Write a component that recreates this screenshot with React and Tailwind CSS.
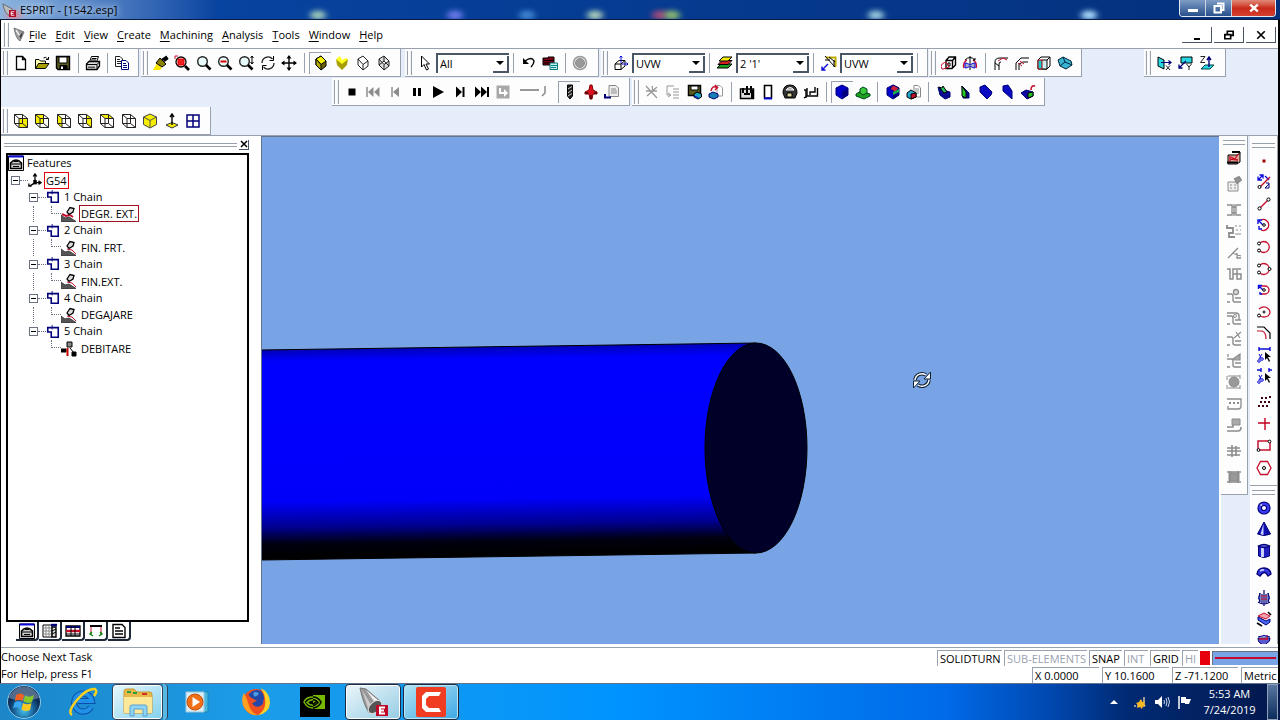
import { Fragment } from "react";

// circle written as path data, so every icon is a plain list of paths
const c = (x, y, r) => `M${x - r} ${y}a${r} ${r} 0 1 0 ${2 * r} 0a${r} ${r} 0 1 0 ${-2 * r} 0`;

const K = "#000";
const G = "#8c8c8c";
const N = "#00007a";
const B = "#0a0ad8";
const R = "#c8102e";
const Y = "#f5ee00";
const W = "#fff";

const wire = [
  "M1.5 1.5H9.5V10.5H1.5ZM6 5.5H14.5V14.5H6ZM1.5 1.5L6 5.5M9.5 1.5L14.5 5.5M9.5 10.5L14.5 14.5M1.5 10.5L6 14.5",
  "#222",
];
const lens = [
  [c(6.5, 6.5, 4.8), "#222", "#e8fbfb", 1.4],
  ["M10 10L14.5 14.5", K, "none", 2.6],
];
const blueCube = [
  ["M8 1L14 4V11L8 15L2 11V4Z", N, "#0000c8"],
  ["M8 7.5L14 4V11L8 15Z", "none", "#000080"],
];
const turning = ["M0 9L4 12L8 11L15 15.5H0Z", "#444", "#555"];
const insert = ["M6 6L9 1.5L13 2.5L12 6L8 8.5Z", K, "#ddd", 1.3];
const bed = ["M1 6H5Q7 6 7 8V12Q7 14 9 14H15M1 14H4M9 10H15", G, "none", 1.4];

// [path, stroke, fill, stroke width] in a 16 x 16 box
const ICONS = {
  newFile: [["M3.5 1.5H9.5L12.5 4.5V14.5H3.5ZM9.5 1.5V4.5H12.5", K, W, 1.3]],
  open: [
    ["M1.5 13.5V4.5H5L6.5 6H11.5V8", K, "#ffffb0"],
    ["M1.5 13.5L4.5 8.5H15L11.5 13.5Z", K, "#a8a000"],
    ["M9.5 3Q12 1 13.5 4M14.5 2V4.5H12", K],
  ],
  save: [
    ["M1.5 1.5H14.5V14.5H3L1.5 13Z", K, "#5c5c20", 1.4],
    ["M4 2H12V8H4Z", K, W],
    ["M5 10.5H12V14.5H5Z", K, K],
    ["M6 11.5H8V14H6Z", "none", W],
  ],
  print: [
    ["M4.5 7L6.5 1.5H13.5L11.5 7", K, W],
    ["M1.5 9L4 6.5H14.5V11L12 14.5H1.5Z", K, "#ddd", 1.3],
    ["M2 9.5H12V14M12 9.5L14.5 7M7 3.5H11.5M6 5H11", K],
    ["M3 11.5H10V13H3Z", "none", "#555"],
  ],
  copy: [
    ["M1.5 1.5H6L8.5 4V11.5H1.5ZM3 4.5H6M3 6.5H7M3 8.5H7", "#222", W],
    ["M7.5 5.5H12L14.5 8V14.5H7.5ZM9 8.5H12M9 10.5H13M9 12.5H13", N, W],
  ],
  brush: [
    ["M0 15L4 8L9 13L7 15Z", "none", "#ffe800"],
    ["M3 8L7 3L13 9L9 12Z", K, "#8a8000"],
    ["M9 5L14 1.5M11 6L15 3", K, "none", 2.2],
  ],
  zoomWindow: [
    ["M1 4V1H4", R],
    [c(7, 7, 5), K, W, 1.3],
    ["M4 4H10V10H4Z", "#e00000", "#f02020"],
    ["M11 11L15 15", K, "none", 2.6],
  ],
  zoom: lens,
  zoomOut: [...lens, ["M3.5 6.5H9.5", "#e00000", "none", 2]],
  zoomFit: [...lens, ["M14 1V9M12.5 3L14 1L15.5 3M12.5 7L14 9L15.5 7", K]],
  rotate: [
    ["M2 8A6 6 0 0 1 12.5 4M14 8A6 6 0 0 1 3.5 12", "#222", "none", 1.3],
    ["M13.5 1V5.5H9.5M2.5 15V10.5H6.5", K],
  ],
  pan: [
    ["M8 1V15M1 8H15", K, "none", 1.4],
    ["M8 0L5.5 3.5H10.5ZM8 16L5.5 12.5H10.5ZM0 8L3.5 5.5V10.5ZM16 8L12.5 5.5V10.5Z", "none", K],
  ],
  shadedEdge: [
    ["M3 4L8 1L13 6V11L8 15L3 10Z", K, "#6c6400"],
    ["M3 4L8 1L13 6L8 9.5Z", K, Y],
    ["M3 4L8 9.5V15L3 10Z", K, "#b0a800"],
  ],
  shaded: [
    ["M2 4L8 8L14 4L13 10L8 15L3 10Z", "none", "#a8a000"],
    ["M2 4L6 1L8 5L12 3L14 4L8 9Z", "none", "#ffff20"],
  ],
  wireCube: [["M3 4L8 1L13 6V11L8 15L3 10ZM3 4L8 9.5L13 6M8 9.5V15", "#222", W]],
  hiddenCube: [["M3 4L8 1L13 6V11L8 15L3 10ZM3 4L8 9.5L13 6M8 9.5V15M8 1V6L3 10M8 6L13 11", "#222", "#ddd"]],
  cursor: [["M4.5 1V12L7 9.5L9.5 15L11.5 14L9 9H12.5Z", K, W]],
  undo: [
    ["M4 6Q11 1 13 6Q13 9 10 12", K, "none", 1.4],
    ["M2 3V9H8Z", "none", K],
  ],
  filter: [
    ["M1 3H6V2H12V10H1Z", K, "#7a0010"],
    ["M1.5 5.5H12M1.5 8H9", K],
    ["M8 8H15.5V14.5H8Z", "#077", "#c8f0f0"],
    ["M9 10.5H15M9 12.5H14", "#088"],
  ],
  record: [
    [c(8, 8, 6.5), "#999", "#eee", 1.5],
    [c(8, 8, 4.5), G, "#999"],
  ],
  workplane: [
    ["M2 9L6 5.5H12V11L8 14.5H2ZM2 9H8V14.5M8 9L12 5.5", K, W],
    ["M8 8V1M9 9H15M6.5 2.5L8 1L9.5 2.5M13.5 7.5L15 9L13.5 10.5", B],
  ],
  layers: [
    ["M0 13L4 9H15L11 13Z", K, "#1ca01c"],
    ["M1 9.5L5 5.5H15L11 9.5Z", K, "#d02020"],
    ["M2 6L6 2H15L11 6Z", K, Y],
  ],
  axes: [
    ["M5 2.5H14.5V12", "#c0aa00", "none", 2],
    ["M4 1L14 12M4 5H9M13 5V12M8 2L14 7", K],
    ["M1 15L7 9M1 11.5V15H4.5", B, "none", 1.4],
  ],
  extrude: [
    ["M5 5.5L8 2H14.5V10L11 13.5H5ZM5 5.5H11.5V13M11.5 5.5L14.5 2", K, W, 1.4],
    ["M7 8H9V11H7Z", K],
    ["M1 14A4 4 0 0 1 6 8L8 12L2 14Z", R],
  ],
  revolve: [
    ["M2 13A5 6 0 0 1 5 5M11 5A5 6 0 0 1 14 13", R, "none", 1.5],
    ["M8 1V15M3 5Q8 0 13 5M11 5H13V3", K],
    ["M3 8Q6 8 8 10Q10 8 13 8V13Q10 13 8 11Q6 13 3 13Z", B, "#aac"],
  ],
  chamferA: [
    ["M2 15V7Q2 3 7 3H15M6 15V9Q6 7 8 7M2 8L6 11", K],
    ["M5 6L10 3L14 5", R],
  ],
  chamferB: [
    ["M2 15V8L7 3H15M5 15V9L9 7H14", K],
    ["M4 8L8 11M6 6L10 9", R],
  ],
  faceCube: [
    ["M2 5L5 2H14V11L11 14H2Z", K, W],
    ["M5.5 5H11V14H5.5ZM11 5L14 2", K, "#cfeff0"],
    ["M2 5H6V14H2Z", "#b00", "#18c8d0"],
  ],
  surface: [
    ["M1 5L6 2L14 6L15 10L9 14L3 11Z", "#023", "#38b4d0"],
    ["M6 2L8 7L3 11M8 7L15 10", "#024"],
  ],
  planeX: [
    ["M2 2L8 5V14L2 11Z", "#000", "#28d8e0"],
    ["M5 7.5H15M12.5 5.5L15 7.5L12.5 9.5", N, "none", 1.2],
    ["M10 10.5L14 15M14 10.5L10 15", "#222"],
  ],
  planeY: [
    ["M3 2H14V8H3Z", "#000", "#28d8e0"],
    ["M8 6L1 13M1 9.5V13H4.5", N, "none", 1.3],
    ["M8.5 9L11 12L13.5 9M11 12V15", "#222"],
  ],
  planeZ: [
    ["M2 14L6 10H15L11 14Z", "#044", "#28d8e0"],
    ["M10 12V3M8 5L10 2L12 5", N, "none", 1.4],
    ["M1.5 1.5H6L1.5 7.5H6", "#222"],
  ],
  stop: [["M4.5 4.5H11.5V11.5H4.5Z", "none", K]],
  rewind: [
    ["M2 3V13", G, "none", 1.5],
    ["M8.5 3V13L3 8ZM14.5 3V13L9 8Z", "none", G],
  ],
  stepBack: [
    ["M5 3V13", G, "none", 1.5],
    ["M12 3V13L6 8Z", "none", G],
  ],
  pause: [["M4 4H7V12H4ZM9 4H12V12H9Z", "none", K]],
  play: [["M3 2V14L14 8Z", "none", K]],
  step: [
    ["M4 2.5V13.5L10 8Z", "none", K],
    ["M11.5 3V13", K, "none", 2],
  ],
  forward: [
    ["M1 2.5V13.5L7 8ZM7 2.5V13.5L13 8Z", "none", K],
    ["M14 3V13", K, "none", 2],
  ],
  jump: [
    ["M1.5 1.5H14.5V14.5H1.5Z", "none", "#a8a8a8"],
    ["M5 4V9H10", W, "none", 2],
    ["M9 5L13 9L9 13Z", "none", W],
  ],
  tool: [
    ["M5.5 1H10.5V12L8 15L5.5 12Z", K, "#222"],
    ["M6 5L10 2.5M6 9L10 6M6 12L10 9.5", "#ccc"],
  ],
  toolRed: [
    ["M7 1H9L10 6L14 8V10H10L9 15H7L6 10H2V8L6 6Z", "#800", "#d81020"],
    ["M8 11V15M2 9H5M11 9H14", K],
  ],
  report: [
    ["M5 1.5H12L14.5 4V12.5H5Z", "#888", "#eee"],
    ["M7 5H12M7 7H13M7 9H13", G],
    ["M1 10V13.5H7", N, "none", 2],
  ],
  cutGray: [["M2 2L13 14M13 3L3 12M8 2L9 7M2 7H13", "#999", "none", 1.3]],
  listGray: [["M9 2H2V11H5M3 9L6 11L3 13M8 5H14M8 8H14M8 11H14M8 14H14", "#999"]],
  saveSim: [
    ["M1.5 1.5H13.5V11.5H1.5Z", K, "#5c5c20", 1.5],
    ["M4 2H11V6H4Z", K, W],
    ["M10 8L14.5 10V13L11 15L7 13V10Z", K, "#20a8c0"],
    ["M7 12L11 13.5V15", B],
  ],
  loadSim: [
    ["M9 1.5H12L14.5 4V12H9Z", "#999", W],
    ["M1 10L5 8L10 10V13L6 15L1 13Z", N, "#1880b0"],
    ["M3 7Q4 1 9 3.5M7 1L9.5 3.5L7 6", R, "none", 1.5],
  ],
  fixture: [
    ["M1.5 5H14.5V14.5H1.5Z", K, "#ddd", 1.5],
    ["M4 4V9M8 2V10M12 2V9M5 10H11M13 6V14", K, "none", 2],
  ],
  stock: [
    ["M4.5 1.5H11.5V14H4.5Z", K, W, 1.6],
    ["M4 14.5H12", B, "none", 2],
  ],
  chuck: [
    ["M1 9Q1 1 8 1T15 9L13 14H3Z", K, "#333"],
    ["M4 6Q8 1 12 6Z", W, "#999"],
    ["M5 9H10V13H5Z", K, "#ddd6a0"],
  ],
  machine: [
    ["M4 4V12H14.5V4M7 11V8H12V3", K, "none", 1.4],
    ["M1 6H3V14M1 14L4 12", K, "none", 1.4],
  ],
  blueCube,
  greenPart: [
    ["M1 10L6 7L15 10V12L9 15L1 12Z", "#042", "#1ca01c"],
    ["M5 5L8 3L12 5V9L8 11L5 9Z", "#042", "#38c838"],
  ],
  rgbCube: [
    ...blueCube,
    ["M8 1L14 4L10 8L5 5Z", N, "#d02040"],
    ["M8 8L14 5V8L8 11Z", "none", "#18b048"],
  ],
  compare: [
    ["M8 1.5H12L14.5 4V13H8Z", "#888", W],
    ["M9 5H13M9 7H13M9 9H13", G],
    ["M1 9L5 6L10 9V13L5 15L1 13Z", K, "#28a8d0"],
    ["M5 10L10 9V13L5 15Z", K, R],
  ],
  cutA: [
    ["M2 3L7 6L14 8V13L9 15L4 11Z", N, "#0a0a90"],
    ["M3 3L8 9L11 8L7 2L6 4Z", K, "#28c060"],
  ],
  cutB: [
    ["M5 2L12 9V14L6 14Z", N, "#0a0a80"],
    ["M5 2L9 8V14L5 12Z", K, "#28c828"],
  ],
  cutC: [["M2 3L7 1L14 8L13 11L9 15L2 8Z", N, "#0c0cc0"]],
  cutD: [["M4 2L9 1L13 7V15L4 7Z", N, "#0c0cc0"]],
  cutE: [
    ["M1 9L6 6L13 8V12L7 15Z", N, "#0a0aa0"],
    ["M8 9L13 8V12L8 14Z", K, "#20c020"],
    ["M11 6Q11 1 15 2", R, "none", 1.6],
  ],
  viewFront: [["M6 5H14.5V14.5H6Z", "none", Y], wire],
  viewLeft: [["M1.5 1.5H9.5V10.5H1.5Z", "none", Y], wire],
  viewSide: [["M1.5 1.5L6 5V14.5L1.5 10.5Z", "none", Y], wire],
  viewRight: [["M9.5 1.5L14.5 5V14.5L9.5 10.5Z", "none", Y], wire],
  viewTop: [["M1.5 1.5H9.5L14.5 5H6Z", "none", Y], wire],
  viewBack: [wire],
  viewIso: [
    ["M8 1L14.5 4V11.5L8 15L1.5 11.5V4Z", "#444", Y],
    ["M1.5 4L8 7.5L14.5 4M8 7.5V15", "#555"],
  ],
  viewPlane: [
    ["M2 12L8 9.5L14 12L8 15Z", "#333", Y],
    ["M8 12V2M6 4L8 1L10 4", K, "none", 1.4],
  ],
  viewGrid: [["M2 2H14V14H2ZM8 2V14M2 8H14", N, "none", 1.5]],
  features: [
    ["M.5 1H15.5V15.5H.5Z", K, W],
    ["M.5 1.5H15.5", B, "none", 2],
    ["M2.5 8Q8 2 13.5 8V13.5H2.5Z", K, "#ccc", 1.5],
    ["M6 6.5H10M2.5 9H13.5M5 11.5H11", K, "none", 1.2],
  ],
  g54: [
    ["M8 1V11H15M8 11L2 15M6 4L8 1L10 4M12 9L15 11L12 13M1 12V15H4", K, "none", 1.5],
    ["M6 8H10V13H6Z", "none", K],
  ],
  chain: [
    ["M2 3H14V14H6V8H2Z", N, W, 1.8],
    ["M7 0V5", N],
  ],
  roughing: [["M1 8L5 10L9 9L12 11", R, "none", 2], turning, insert],
  finishing: [["M6 9L11 10L15 14", R], turning, insert],
  cutoff: [
    ["M0 8H5V11H0ZM11 11H15V15H11Z", K, K],
    ["M6 1H11V6H6Z", K, "#888"],
    ["M6.5 7V15", "#c00", "none", 2],
    ["M9 7L13 12", K],
  ],
  tabTools: [
    ["M1 2H10V14H1Z", K, W],
    ["M1 5H10M1 8H10M1 11H10M4 3V14M7 3V14", "#888"],
    ["M10 4H14V14H10Z", K, "#ddd", 1.4],
    ["M9 2H15", N, "none", 2.4],
    ["M10 8L14 6M10 11L14 9", K],
  ],
  tabOps: [
    ["M1 3H15V13H1Z", K, W, 1.3],
    ["M1 4H15", N, "none", 2],
    ["M1 8H15", R, "none", 2.4],
    ["M1 11H15M6 3V13M10 3V13", K],
  ],
  tabPath: [
    ["M2 3H14", K, "none", 2],
    ["M3 4V12M13 4V12", R],
    ["M4 9L2 11L5 13M12 9L14 11L11 13", "#080", "none", 1.4],
  ],
  tabDoc: [["M2 1.5H11L14 4.5V14.5H2ZM4 5H9M4 8H12M4 11H12", K, W, 1.4]],
  // turning column
  turret: [
    ["M2 5H12L14 2V12L11 14H2Z", K, "#e0a898"],
    ["M4 6V12M5 7L9 9L12 4M4 9L12 10", R, "none", 1.3],
    ["M1 12.5H12M6 2H14", K, "none", 2.2],
  ],
  toolCard: [
    ["M2 6H12V15H2ZM4 9H6M8 9H10M4 12H6M8 12H10", G, "#eee"],
    ["M9 3L13 1L15 4L11 7Z", G, "#999", 2],
  ],
  gA: [["M1 3H6V13H1M15 3H10V13H15M6 5H10M6 11H10M8 2V14", G, "none", 1.3]],
  gB: [
    ["M1 2V5H7V10H3V14H9", G, "none", 1.8],
    ["M9 3H11M13 3H15M10 7H12M14 7H15M9 11H15", G],
  ],
  gC: [["M2 13L12 3M6 8L15 11M11 8V13H15", G, "none", 1.3]],
  gD: [["M1 3H4V13H7V3H15M7 8H15V13H11V4", G, "none", 1.5]],
  gE: [bed, [c(10, 4, 2.5), G, "#ddd", 1.3]],
  gF: [bed, ["M1 3H10Q13 3 13 6V10", G, "none", 1.4], [c(9, 6, 1.5), G]],
  gG: [bed, ["M8 7L15 1M10 1L14 7", G, "none", 1.2]],
  gH: [bed, ["M7 6L14 1V7H9ZM2 1V4", G, "#aaa", 1.2]],
  gI: [
    [c(8, 8, 5), G, "#999"],
    ["M1 2V6M14 1V5M1 11V15M14 11V15M2 2H14M2 14H14", G],
  ],
  gJ: [
    ["M1 3H15V10Q15 13 12 13H2V10", G, "none", 1.3],
    ["M3 7H5M7 7H9M11 7H13", G, "none", 2],
  ],
  gK: [
    ["M1 10H7V7M1 14H12Q15 14 15 10", G, "none", 1.6],
    ["M6 2H14V8H6Z", G, "#aaa"],
  ],
  gL: [["M1 5H14M1 8H15M1 12H14M6 2V14M10 3V13", G, "none", 1.6]],
  gM: [
    ["M3 4H13V12H3Z", G, "#999"],
    ["M1 3H15M1 13H15M4 2V14M12 2V14", G, "none", 1.4],
  ],
  // geometry column
  point: [["M6.5 6.5H9.5V9.5H6.5Z", "none", "#a00000"]],
  lineTool: [
    ["M2 6L7 1M2 2.5V6H6M3.5 1H7V4.5M9 2L13 6", B, "none", 1.3],
    ["M4 13L14 3", R, "none", 1.4],
    ["M10 9H13M13 9V14H9L13 10", N],
    [c(3.5, 13, 1.5), K, W],
  ],
  segment: [
    ["M4 12L12 4", R, "none", 1.4],
    [c(3.5, 12.5, 1.6), K, W],
    [c(12.5, 3.5, 1.6), K, W],
  ],
  arcA: [
    ["M5 3A5.5 5.5 0 1 1 5 13", R, "none", 1.3],
    ["M7 8L3 4M2 7V3H6M3 9V12H6", B, "none", 1.4],
    [c(8, 8, 1.3), K, W],
  ],
  arcB: [
    ["M4 4A5.5 5.5 0 1 1 4 12", R, "none", 1.3],
    [c(3, 4.5, 1.5), K, W],
    [c(3, 11.5, 1.5), K, W],
  ],
  arcC: [
    ["M4 4A5.5 5.5 0 1 1 4 12", R, "none", 1.3],
    [c(3, 4.5, 1.5), K, W],
    [c(3, 11.5, 1.5), K, W],
    [c(13.5, 8, 1.5), K, W],
  ],
  arcD: [
    ["M5 4H9A4 4 0 0 1 9 12H5", R, "none", 1.4],
    ["M3 4L7 8M2.5 7V3.5H6M4 10V12H6", B, "none", 1.4],
    [c(8, 8, 1.3), K, W],
  ],
  arcE: [
    ["M3 5Q8 1 12 4.5T12 12Q8 14 4 12", R, "none", 1.3],
    [c(3, 11.5, 1.5), K, W],
    [c(8, 8, 1), K, W],
  ],
  offset: [
    ["M1 2H8L14 8V14", K, "none", 1.2],
    ["M1 6H6Q10 7 10 14", R, "none", 1.2],
  ],
  trimA: [
    ["M3 2H14M3 0V4M14 0V4", B, "none", 1.4],
    [c(3, 14, 1.3), B],
    [c(6, 12, 1.3), B],
    ["M3 12L6 7M5 11L3 7", B],
    ["M9 5V13L11 11L13 15L14 14L12 10H15Z", "none", K],
  ],
  trimB: [
    ["M1 2H5M13 2H16M5 0V4M13 0V4", B, "none", 1.4],
    [c(3, 14, 1.3), B],
    [c(6, 12, 1.3), B],
    ["M3 12L6 7M5 11L3 7", B],
    ["M9 5V13L11 11L13 15L14 14L12 10H15Z", "none", K],
  ],
  pointGrid: [
    [
      "M5 3h2v2h-2zM9 3h2v2h-2zM13 2h2v2h-2zM4 7h2v2h-2zM8 7h2v2h-2zM12 7h2v2h-2zM2 11h2v2h-2zM6 11h2v2h-2zM10 11h2v2h-2z",
      "none",
      "#400010",
    ],
  ],
  cross: [["M2 7H14M9 2V14", "#c00020", "none", 1.4]],
  rectTool: [
    ["M2 3H14V12H2Z", R, "none", 1.5],
    [c(13.5, 3.5, 1.4), K, W],
    [c(2.5, 12, 1.4), K, W],
  ],
  hexTool: [
    ["M4.5 1.5H11.5L15 8L11.5 14.5H4.5L1 8Z", R, "none", 1.3],
    [c(8, 8, 1.5), K, W],
  ],
  torus: [
    [c(8, 8, 4.3), N, "none", 4.6],
    [c(8, 8, 4.3), "#3a3af0", "none", 2.4],
    ["M4.5 5.5L6 4.5", W, "none", 1.5],
  ],
  cone: [
    ["M8 1L14.5 13Q8 16 1.5 13Z", N, "#1010b0"],
    ["M7.5 3V14Q6 14 4.5 13Z", "none", "#c8d0ff"],
  ],
  cylinder: [
    ["M2.5 3V13Q8 16 13.5 13V3Z", N, "#2020c0"],
    ["M5 4H8V14H5Z", "none", "#c8d0ff"],
    ["M2.5 3Q8 0 13.5 3Q8 6 2.5 3Z", N, "#6868e8", 1.4],
  ],
  pipe: [
    ["M1 10Q2 4 8 4T15 10L12 12Q10 8 8 8.5T4 12Z", N, "#3838e0", 1.4],
    ["M4 7Q6 5.5 8 6", "#c8d0ff", "none", 1.5],
  ],
  rotSolid: [
    ["M4 3Q1 8 4 12V3M12 3Q15 8 12 12V3", N, "#88f"],
    ["M8 0V16M6 4V13M10 4V13M2 12Q8 16 14 12", N, "none", 1.2],
    ["M5 6H11M5 9H11", R],
  ],
  sweep: [
    ["M2 5L8 2L14 5L10 8Z", R, "#f0a0b0"],
    ["M2 6L10 10L14 8V11L10 14L2 9Z", N, "#4868f0"],
    ["M12 1L15 4M1 12L6 15", K, "none", 1.6],
  ],
  loft: [
    ["M2 6H14Q14 10 11 11L8 14L4 11Q2 10 2 6Z", N, "#5a5ad0"],
    ["M3 7H12M11 3V8", R, "none", 1.3],
    ["M2 5Q8 2 14 5", N, "#aaf"],
  ],
};

const Icon = ({ name, className = "size-4" }) => (
  <svg viewBox="0 0 16 16" className={`${className} shrink-0`} aria-hidden="true">
    {ICONS[name].map(([d, stroke, fill = "none", width = 1], i) => (
      <path key={i} d={d} stroke={stroke} fill={fill} strokeWidth={width} />
    ))}
  </svg>
);

const Tools = ({ names, className, pressed }) => (
  <div className={`flex shrink-0 ${className}`}>
    {names.map((name) => (
      <button
        key={name}
        aria-label={name}
        className={`flex h-[22px] flex-1 items-center justify-center ${
          name === pressed ? "border-t border-l border-gray-400 bg-gray-50" : ""
        }`}
      >
        <Icon name={name} />
      </button>
    ))}
  </div>
);

const Grip = () => (
  <div className="mr-px flex h-6 w-2 shrink-0 justify-center gap-0.5">
    <span className="w-0.5 border-r border-gray-400 bg-gray-100" />
    <span className="w-0.5 border-r border-gray-400 bg-gray-100" />
  </div>
);

const Sep = () => <span className="mx-1 h-5 w-px shrink-0 bg-gray-400" />;

const Bar = ({ className, children }) => (
  <div
    className={`flex h-7 shrink-0 items-center border-r border-b border-gray-400 bg-[#fdfdfe] ${className}`}
  >
    <Grip />
    {children}
  </div>
);

const Combo = ({ label, value }) => (
  <div className="relative h-5 w-[73px] shrink-0">
    <select
      aria-label={label}
      className="h-5 w-full appearance-none border-t-2 border-l-2 border-gray-600 bg-white pl-0.5 text-[11px] leading-4"
      defaultValue={value}
    >
      <option>{value}</option>
    </select>
    <span className="pointer-events-none absolute right-0 bottom-0 flex h-[17px] w-4 items-center justify-center border-r-2 border-b-2 border-gray-600">
      <svg viewBox="0 0 8 4" className="h-1 w-2">
        <path d="M0 0H8L4 4Z" />
      </svg>
    </span>
  </div>
);

const MENUS = ["File", "Edit", "View", "Create", "Machining", "Analysis", "Tools", "Window", "Help"];

// desktop icons that shimmer through the glass title bar
const GLOW = [
  { x: 14, color: "#d88898" },
  { x: 318, color: "#9cc8b8" },
  { x: 455, color: "#6878e8" },
  { x: 527, color: "#3c84d0" },
  { x: 595, color: "#a8ccb8" },
  { x: 660, color: "#a04878" },
  { x: 672, color: "#88b870" },
  { x: 876, color: "#98c8dc" },
  { x: 1089, color: "#a8d8fc" },
];

const TitleBar = () => (
  <header className="relative flex h-5 shrink-0 items-start justify-between overflow-hidden border-b border-[#0a1a40] bg-linear-to-r from-[#8db4e0] via-[#0743a0] via-17% to-[#04307c]">
    <svg viewBox="0 0 1280 20" preserveAspectRatio="none" className="absolute inset-0 size-full" aria-hidden="true">
      <filter id="haze" x="-50%" y="-50%" width="200%" height="200%">
        <feGaussianBlur stdDeviation="3" />
      </filter>
      {GLOW.map((g) => (
        <ellipse key={g.x} cx={g.x} cy="16" rx="8" ry="5" fill={g.color} filter="url(#haze)" />
      ))}
    </svg>
    <div className="relative flex h-5 items-center gap-1 pl-0.5">
      <svg viewBox="0 0 16 16" className="size-3.5">
        <path d="M1 1L12 7L8 14Q3 12 1 1Z" fill="#bbb" stroke="#666" />
        <path d="M8 8H16V16H8Z" fill="#b00828" />
        <path d="M14 10H10.5V14H14M10.5 12H13" stroke="#fff" fill="none" />
      </svg>
      <h1 className="leading-4 [text-shadow:0_0_6px_#cfe2f8,0_0_10px_#cfe2f8]">ESPRIT - [1542.esp]</h1>
    </div>
    <div className="relative mr-1 flex h-[17px] overflow-hidden rounded-b border border-t-0 border-slate-200">
      <button aria-label="Minimize" className="flex w-[26px] items-end justify-center border-r border-slate-300 bg-linear-to-b from-[#7e9cc4] to-[#28508c] pb-1">
        <span className="h-[3px] w-2.5 bg-white" />
      </button>
      <button aria-label="Restore" className="flex w-[26px] items-center justify-center border-r border-slate-300 bg-linear-to-b from-[#7e9cc4] to-[#28508c]">
        <svg viewBox="0 0 12 12" className="size-3">
          <path d="M4 1.5H10.5V8H8M1.5 4H8V10.5H1.5Z" stroke="#fff" strokeWidth="2" fill="none" />
        </svg>
      </button>
      <button aria-label="Close" className="flex w-[43px] items-center justify-center bg-linear-to-b from-[#e08878] via-[#c82818] to-[#d84030]">
        <svg viewBox="0 0 12 12" className="size-2.5">
          <path d="M1.5 2L10.5 10M10.5 2L1.5 10" stroke="#fff" strokeWidth="3" />
        </svg>
      </button>
    </div>
  </header>
);

const MenuBar = () => (
  <nav className="flex h-[29px] shrink-0 items-center border-b border-gray-400 bg-white pt-0.5 pl-px">
    <Grip />
    <svg viewBox="0 0 16 16" className="mr-0.5 size-4">
      <path d="M3 1L13 5L9 14Q5 12 3 1Z" fill="#999" stroke="#777" />
      <path d="M5 3L10 11" stroke="#eee" strokeWidth="1.5" />
      <path d="M8 9L12 5L10 12Z" fill="#444" />
    </svg>
    <div className="flex gap-[9px]">
      {MENUS.map((m) => (
        <button key={m}>
          <span className="underline underline-offset-2">{m[0]}</span>
          {m.slice(1)}
        </button>
      ))}
    </div>
    <div className="mr-0.5 ml-auto flex gap-0.5">
      <button aria-label="Minimize document" className="flex h-4 w-[30px] items-end justify-center border-r border-b border-gray-600 pb-0.5">
        <span className="h-0.5 w-1.5 bg-black" />
      </button>
      <button aria-label="Restore document" className="flex h-4 w-[30px] items-center justify-center border-r border-b border-gray-600">
        <svg viewBox="0 0 12 12" className="size-2.5">
          <path d="M4 5V1.5H11V6.5H8M1 5.5H8V10.5H1Z" stroke="#000" strokeWidth="2" fill="none" />
        </svg>
      </button>
      <button aria-label="Close document" className="flex h-4 w-[30px] items-center justify-center border-r border-b border-gray-600">
        <svg viewBox="0 0 12 12" className="size-2.5">
          <path d="M1.5 1.5L10.5 10.5M10.5 1.5L1.5 10.5" stroke="#000" strokeWidth="2" />
        </svg>
      </button>
    </div>
  </nav>
);

const Toolbars = () => (
  <div className="shrink-0 border-b border-gray-400 bg-[#e6edfa]">
    <div className="flex h-[29px] overflow-hidden">
      <Bar className="w-[138px]">
        <Tools names={["newFile", "open", "save"]} className="w-16" />
        <Sep />
        <Tools names={["print"]} className="w-5" />
        <Sep />
        <Tools names={["copy"]} className="w-5" />
      </Bar>
      <Bar className="ml-0.5 w-[260px]">
        <Tools
          names={["brush", "zoomWindow", "zoom", "zoomOut", "zoomFit", "rotate", "pan"]}
          className="w-[150px]"
        />
        <Sep />
        <Tools
          names={["shadedEdge", "shaded", "wireCube", "hiddenCube"]}
          className="w-[86px]"
          pressed="shadedEdge"
        />
      </Bar>
      <Bar className="ml-1 w-[194px]">
        <Tools names={["cursor"]} className="w-[22px]" />
        <Combo label="Selection filter" value="All" />
        <Sep />
        <Tools names={["undo", "filter"]} className="w-[43px]" />
        <Sep />
        <Tools names={["record"]} className="w-5" />
      </Bar>
      <Bar className="ml-0.5 w-[327px]">
        <Tools names={["workplane"]} className="w-[22px]" />
        <Combo label="Work plane" value="UVW" />
        <Sep />
        <Tools names={["layers"]} className="w-[22px]" />
        <Combo label="Layer" value="2 '1'" />
        <Sep />
        <Tools names={["axes"]} className="w-[22px]" />
        <Combo label="Work coordinates" value="UVW" />
        <Sep />
      </Bar>
      <Bar className="ml-px w-[153px]">
        <Tools names={["extrude", "revolve"]} className="w-[43px]" />
        <Sep />
        <Tools names={["chamferA", "chamferB", "faceCube", "surface"]} className="w-[86px]" />
      </Bar>
      <Bar className="ml-[62px] w-[82px]">
        <Tools names={["planeX", "planeY", "planeZ"]} className="w-[65px]" />
      </Bar>
    </div>
    <div className="flex h-[29px] overflow-hidden pl-[331px]">
      <Bar className="w-[298px]">
        <Tools
          names={["stop", "rewind", "stepBack", "pause", "play", "step", "forward", "jump"]}
          className="w-[173px]"
        />
        <svg viewBox="0 0 36 16" className="mx-1 h-4 w-9 shrink-0">
          <path d="M2 6H21" stroke="#333" />
          <path d="M27 2V9L24 12" stroke="#888" fill="none" strokeWidth="1.5" />
        </svg>
        <Tools names={["tool", "toolRed", "report"]} className="w-[65px]" pressed="tool" />
      </Bar>
      <Bar className="ml-0.5 w-[413px]">
        <Tools names={["cutGray", "listGray", "saveSim", "loadSim"]} className="w-[86px]" />
        <Sep />
        <Tools names={["fixture", "stock", "chuck", "machine"]} className="w-[86px]" />
        <Sep />
        <Tools names={["blueCube", "greenPart"]} className="w-[42px]" pressed="blueCube" />
        <Sep />
        <Tools names={["rgbCube", "compare"]} className="w-[42px]" />
        <Sep />
        <Tools names={["cutA", "cutB", "cutC", "cutD", "cutE"]} className="w-[106px]" />
      </Bar>
    </div>
    <div className="flex h-7">
      <Bar className="w-[210px]">
        <Tools
          names={[
            "viewFront",
            "viewLeft",
            "viewSide",
            "viewRight",
            "viewTop",
            "viewBack",
            "viewIso",
            "viewPlane",
            "viewGrid",
          ]}
          className="w-[194px]"
        />
      </Bar>
    </div>
  </div>
);

const CHAINS = [
  { name: "1 Chain", op: "DEGR. EXT.", icon: "roughing", active: true },
  { name: "2 Chain", op: "FIN. FRT.", icon: "finishing" },
  { name: "3 Chain", op: "FIN.EXT.", icon: "finishing" },
  { name: "4 Chain", op: "DEGAJARE", icon: "finishing" },
  { name: "5 Chain", op: "DEBITARE", icon: "cutoff" },
];

const Toggle = () => (
  <button aria-label="Collapse" className="flex size-[9px] shrink-0 items-center justify-center border border-gray-500 bg-white">
    <span className="h-px w-[5px] bg-black" />
  </button>
);

const Dots = () => <span className="w-2 shrink-0 border-t border-dotted border-gray-500" />;

const FeatureTree = () => (
  <aside className="flex w-[260px] shrink-0 flex-col bg-white">
    <div className="flex h-[17px] items-center gap-0.5 pl-[3px]">
      <span className="h-1 w-[233px] border-y border-gray-400" />
      <button aria-label="Close panel" className="flex size-2.5 items-center justify-center border-r border-b border-gray-600">
        <svg viewBox="0 0 8 8" className="size-2">
          <path d="M1 1L7 7M7 1L1 7" stroke="#000" strokeWidth="1.5" />
        </svg>
      </button>
    </div>
    <div className="ml-[5px] w-[243px] flex-1 border-2 border-black">
      <div className="grid h-[202px] auto-rows-fr">
        <div className="flex items-center gap-[3px]">
          <Icon name="features" />
          <span>Features</span>
        </div>
        <div className="flex items-center pl-[3px]">
          <Toggle />
          <Dots />
          <Icon name="g54" className="size-3.5" />
          <span className="ml-0.5 border border-red-600 px-px leading-[15px]">G54</span>
        </div>
        {CHAINS.map((chain, i) => (
          <Fragment key={chain.name}>
            <div className="flex items-center pl-[21px]">
              <Toggle />
              <Dots />
              <Icon name="chain" className="size-3.5" />
              <span className="ml-1">{chain.name}</span>
            </div>
            <div className="flex items-center pl-[25px]">
              <span
                className={`h-full w-[18px] shrink-0 ${
                  i < CHAINS.length - 1 ? "border-l border-dotted border-gray-500" : ""
                }`}
              />
              <span className="h-2 w-2.5 shrink-0 self-start border-b border-l border-dotted border-gray-500" />
              <Icon name={chain.icon} />
              <span
                className={`ml-0.5 border px-px leading-[15px] whitespace-nowrap ${
                  chain.active ? "border-[#a01020]" : "border-transparent"
                }`}
              >
                {chain.op}
              </span>
            </div>
          </Fragment>
        ))}
      </div>
    </div>
    <div className="flex h-[22px] shrink-0 pl-[15px]">
      {["features", "tabTools", "tabOps", "tabPath", "tabDoc"].map((name) => (
        <button key={name} aria-label={name} className="flex h-[19px] w-[23px] items-center justify-center rounded-br border-r-2 border-b-2 border-gray-800">
          <Icon name={name} />
        </button>
      ))}
    </div>
  </aside>
);

const Viewport = () => (
  <main className="min-w-0 flex-1 overflow-hidden border-t border-l border-slate-500 bg-[#78a4e6]">
    <svg className="block size-full" role="img" aria-label="Turned part">
      <defs>
        <linearGradient id="steel" gradientUnits="userSpaceOnUse" x1="0" y1="208" x2="3" y2="420">
          <stop offset="0" stopColor="#000060" />
          <stop offset="0.03" stopColor="#0000c0" />
          <stop offset="0.08" stopColor="#0000ff" />
          <stop offset="0.74" stopColor="#0000fa" />
          <stop offset="0.86" stopColor="#000090" />
          <stop offset="0.94" stopColor="#000010" />
          <stop offset="1" stopColor="#000" />
        </linearGradient>
      </defs>
      <path d="M-1 213L494 206V416L-1 423Z" fill="url(#steel)" />
      <path d="M-1 213L494 206M-1 423L494 416" stroke="#000" />
      <ellipse cx="494" cy="311" rx="51" ry="105" fill="#000028" stroke="#000" />
      <g transform="translate(651 234)">
        <path d="M2 9A7 7 0 0 1 13 4M16 9A7 7 0 0 1 5 14" stroke="#123" strokeWidth="3.5" fill="none" />
        <path d="M2 9A7 7 0 0 1 13 4M16 9A7 7 0 0 1 5 14" stroke="#fff" strokeWidth="1.5" fill="none" />
        <path d="M17.5 1V8H11ZM.5 17V10H7Z" stroke="#123" fill="#fff" />
      </g>
    </svg>
  </main>
);

const HGrip = () => <div className="mx-0.5 h-[5px] shrink-0 border-y border-gray-400" />;

const Column = ({ names, className }) => (
  <div className={`flex shrink-0 flex-col items-center ${className}`}>
    {names.map((name) => (
      <button key={name} aria-label={name} className="flex min-h-0 w-full flex-1 items-center justify-center">
        <Icon name={name} />
      </button>
    ))}
  </div>
);

const SideBars = () => (
  <aside className="flex shrink-0 gap-0.5 overflow-hidden border-l-2 border-white bg-[#e6edfa]">
    <div className="flex w-[27px] flex-col self-start border-r border-b border-gray-400 bg-[#fdfdfe] pt-1 pb-1">
      <HGrip />
      <Column names={["turret", "toolCard"]} className="h-[52px]" />
      <Column
        names={["gA", "gB", "gC", "gD", "gE", "gF", "gG", "gH", "gI", "gJ", "gK"]}
        className="mt-0.5 h-[237px]"
      />
      <Column names={["gL", "gM"]} className="mt-0.5 h-[52px]" />
    </div>
    <div className="flex h-0 min-h-full w-[28px] flex-col overflow-hidden border-r border-gray-400 bg-[#fdfdfe] pt-[7px]">
      <HGrip />
      <Column
        names={[
          "point",
          "lineTool",
          "segment",
          "arcA",
          "arcB",
          "arcC",
          "arcD",
          "arcE",
          "offset",
          "trimA",
          "trimB",
        ]}
        className="mt-0.5 h-[237px]"
      />
      <Column names={["pointGrid", "cross", "rectTool", "hexTool"]} className="mt-1 h-[88px]" />
      <div className="mt-1.5 mb-1 border-t border-gray-400" />
      <HGrip />
      <Column names={["torus", "cone", "cylinder", "pipe"]} className="mt-0.5 h-[86px]" />
      <Column names={["rotSolid", "sweep", "loft"]} className="mt-1 h-16" />
    </div>
  </aside>
);

const Cell = ({ className = "", children }) => (
  <span className={`h-4 shrink-0 overflow-hidden border-t border-l border-gray-400 pl-0.5 leading-[15px] whitespace-nowrap ${className}`}>
    {children}
  </span>
);

const StatusBar = () => (
  <footer className="shrink-0 border-t border-gray-400 bg-white pt-px">
    <div className="flex h-[17px] items-center gap-0.5">
      <span className="flex-1">Choose Next Task</span>
      <Cell className="w-[65px]">SOLIDTURN</Cell>
      <Cell className="w-[83px] text-gray-400">SUB-ELEMENTS</Cell>
      <Cell className="w-[33px]">SNAP</Cell>
      <Cell className="w-6 text-gray-400">INT</Cell>
      <Cell className="w-[30px]">GRID</Cell>
      <Cell className="w-4 text-gray-400">HI</Cell>
      <span className="h-3.5 w-2.5 bg-red-600" />
      <span className="flex h-3.5 w-[66px] items-center border-t border-l border-gray-500 bg-[#78a4e6] px-0.5">
        <span className="h-0.5 w-full bg-[#c00830]" />
      </span>
    </div>
    <div className="flex h-[17px] items-center gap-[3px]">
      <span className="flex-1">For Help, press F1</span>
      <Cell className="w-[67px]">X 0.0000</Cell>
      <Cell className="w-[67px]">Y 10.1600</Cell>
      <Cell className="w-[66px]">Z -71.1200</Cell>
      <Cell className="w-[37px]">Metric</Cell>
    </div>
  </footer>
);

const Taskbar = () => (
  <footer className="flex h-[37px] shrink-0 items-stretch overflow-hidden border-t border-slate-500 bg-[linear-gradient(to_right,#1c86c8,#1c9ce8_20%,#0094ff_48%,#006ae8_74%,#0048b0_82%,#012a74_88%,#03184c)]">
    <button aria-label="Start" className="flex w-12 items-center justify-center">
      <svg viewBox="0 0 36 36" className="size-9">
        <defs>
          <radialGradient id="orb" cy="0.75">
            <stop offset="0" stopColor="#48c8f0" />
            <stop offset="0.6" stopColor="#186098" />
            <stop offset="1" stopColor="#0a2c58" />
          </radialGradient>
        </defs>
        <circle cx="18" cy="18" r="16.5" fill="url(#orb)" stroke="#8cc8e8" />
        <path d="M3 14A15.500 15.500 0 0 1 33 14Q18 19 3 14Z" fill="#fff" opacity="0.3" />
        <path d="M10 11Q14 8 18 11L16.500 17Q13 15 9 17Z" fill="#f06020" />
        <path d="M19 11.500Q23 14 28 11L26 18Q22 20 17.500 17.500Z" fill="#88c828" />
        <path d="M8.500 18.500Q12 16 16 18.500L14.500 25Q11 22 7 24.500Z" fill="#38a8f0" />
        <path d="M17 19Q21 21.500 25.500 19L24 26Q19.500 28 15.500 25.500Z" fill="#fcc820" />
      </svg>
    </button>
    <button aria-label="Internet Explorer" className="flex w-[64px] items-center justify-center pl-1.5">
      <svg viewBox="0 0 32 32" className="size-8">
        <path d="M24 21A9 9 0 1 1 25 15H11" fill="none" stroke="#0b50a8" strokeWidth="6" />
        <path d="M24 21A9 9 0 1 1 25 15H11" fill="none" stroke="#2090e8" strokeWidth="4" />
        <path d="M5 29Q0 26 10 14T28 3Q31 5 27 10" fill="none" stroke="#f8d020" strokeWidth="2.5" />
      </svg>
    </button>
    <button aria-label="Explorer" className="flex w-[51px] items-center justify-center rounded-sm border border-slate-700 bg-linear-to-br from-[#e8f8fc] to-[#80d0ec] shadow-[inset_0_0_0_1px_#fff]">
      <svg viewBox="0 0 32 30" className="h-[30px] w-8">
        <path d="M2 4Q2 2 5 2H12L15 5H28Q30 5 30 8V26H2Z" fill="#e8b848" stroke="#c89830" />
        <path d="M5 5H9M11 6H15" stroke="#28a040" strokeWidth="2" />
        <path d="M20 7H25" stroke="#d03020" strokeWidth="2" />
        <path d="M2 10H30V26H2Z" fill="#fce898" />
        <path d="M8 29V20Q8 18 10 18H23Q25 18 25 20V29H21V22H12V29Z" fill="#90d4f4" stroke="#58a0d0" />
      </svg>
    </button>
    <span className="w-[5px] rounded-r-sm border-r border-slate-700 bg-[#58b8e4]" />
    <button aria-label="Media Player" className="flex w-[58px] items-center justify-center">
      <svg viewBox="0 0 26 26" className="size-[26px]">
        <path d="M8 3H24V23H8Z" fill="#48b8e0" stroke="#1888b8" />
        <path d="M2 3H20V23H2Z" fill="#d8eef8" stroke="#a0c8dc" />
        <circle cx="11" cy="13" r="8" fill="#f07018" stroke="#c85008" />
        <path d="M8.5 8V18L16 13Z" fill="#fff" />
      </svg>
    </button>
    <button aria-label="Firefox" className="flex w-[59px] items-center justify-center">
      <svg viewBox="0 0 32 32" className="size-[30px]">
        <circle cx="16" cy="16" r="14" fill="#f05020" />
        <path d="M3 6Q-1 16 4 23Q9 31 18 30Q10 27 8 18Q6 11 3 6Z" fill="#ffa020" />
        <path d="M21 1Q31 6 31 17Q30 28 18 30Q26 25 26 16Q26 8 21 1Z" fill="#ffd028" />
        <path d="M8 8Q14 1 21 4Q26 9 24 14Q24 20 18 21Q13 21 12 17L17 15L12 12Q9 11 8 8Z" fill="#2448a8" />
        <path d="M13 6Q17 4 19 7Q18 10 14 10Z" fill="#48a0e0" />
      </svg>
    </button>
    <button aria-label="Nvidia" className="flex w-[60px] items-center justify-center">
      <svg viewBox="0 0 30 30" className="size-[30px]">
        <path d="M0 0H30V30H0Z" />
        <path d="M13 8H25V22H13Z" fill="#76b900" />
        <path d="M13 10Q6 10 4 15Q8 22 14 21Q20 19 21 15Q18 10 13 10M13 12.5Q9 13 7 15.5Q10 19 14 18.5L18 15.5Q16 13 13 12.5M13 14Q10 15 13 17L16 15" fill="none" stroke="#000" strokeWidth="1.5" />
        <path d="M13 10Q6 10 4 15Q7 21 13 21M13 12.5Q9 13 7 15.5Q9 18 13 18.5" fill="none" stroke="#76b900" strokeWidth="1.5" />
      </svg>
    </button>
    <button aria-label="Esprit" className="mr-0.5 flex w-14 items-center justify-center rounded-sm border border-slate-800 bg-linear-to-br from-[#ecf6fa] to-[#94cce4] shadow-[inset_0_0_0_1px_#fff]">
      <svg viewBox="0 0 32 30" className="h-[30px] w-8">
        <path d="M3 1L9 2L24 15L12 26Q6 16 3 1Z" fill="#999" stroke="#777" />
        <path d="M5 3L16 21L12 24Z" fill="#ccc" />
        <path d="M9 3L22 14L19 17Z" fill="#eee" />
        <ellipse cx="18" cy="20" rx="8" ry="5" transform="rotate(-42 18 20)" fill="#555" stroke="#ddd" />
        <path d="M19 18H31V29H19Z" fill="#c00828" />
        <path d="M28 20.5H23V26.5H28M23 23.5H27" stroke="#fff" strokeWidth="2" fill="none" />
      </svg>
    </button>
    <button aria-label="Camtasia" className="flex w-14 items-center justify-center rounded-sm border border-slate-800 bg-linear-to-br from-[#b0e4f4] to-[#38a8e4] shadow-[inset_0_0_0_1px_#b8e4f8]">
      <svg viewBox="0 0 30 30" className="size-[30px]">
        <rect width="30" height="30" rx="2" fill="#f03c20" />
        <path d="M25 5L23 9H13L10 12V18L13 21H23L25 25H10L6 21V9L10 5Z" fill="#fff" />
      </svg>
    </button>
    <div className="ml-auto flex items-center gap-2 text-white">
      <svg viewBox="0 0 8 4" className="mr-1.5 h-1 w-2">
        <path d="M0 4L4 0L8 4Z" fill="#fff" />
      </svg>
      <svg viewBox="0 0 14 14" className="size-3.5">
        <path d="M0 12H2V10H4V12H5V8H7V12H8V5H10V12H11V2H13V12Z" fill="#999" />
        <path d="M9 4L10 7L13 6L12 9L14 11L11 11L10 14L8 12L5 13L6 10L4 8L7 7Z" fill="#fcb820" />
      </svg>
      <svg viewBox="0 0 16 14" className="h-3.5 w-4">
        <path d="M1 5H4L8 1V13L4 9H1Z" fill="#fff" />
        <path d="M10 5Q11 7 10 9M12 3Q14 7 12 11M14 2Q17 7 14 12" stroke="#ccd8e8" fill="none" />
      </svg>
      <svg viewBox="0 0 14 14" className="size-3.5">
        <path d="M1 1V14" stroke="#fff" strokeWidth="1.5" />
        <path d="M3 2H8V4H13L11 9H7V8H3Z" fill="#fff" />
      </svg>
    </div>
    <div className="flex w-[75px] flex-col justify-center text-center leading-4 text-white">
      <span>5:53 AM</span>
      <span>7/24/2019</span>
    </div>
    <button aria-label="Show desktop" className="mr-0.5 w-[11px] border border-slate-400 bg-linear-to-b from-[#5878a0] to-[#0c2c5c]" />
  </footer>
);

const App = () => {
  return (
    <div className="flex h-screen flex-col overflow-hidden bg-white font-['Open_Sans','Noto_Sans',sans-serif] text-[11px] text-black">
      <TitleBar />
      <div className="flex min-h-0 flex-1 flex-col border-r-2 border-l border-black">
        <MenuBar />
        <Toolbars />
        <div className="flex min-h-0 flex-1 pb-[3px]">
          <FeatureTree />
          <Viewport />
          <SideBars />
        </div>
        <StatusBar />
      </div>
      <Taskbar />
    </div>
  );
};

export default App;
